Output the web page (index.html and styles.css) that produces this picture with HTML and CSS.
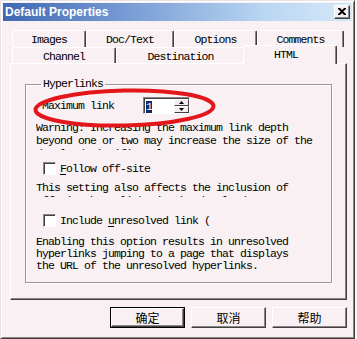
FILE: index.html
```html
<!DOCTYPE html>
<html>
<head>
<meta charset="utf-8">
<link rel="stylesheet" href="styles.css">
</head>
<body>
<div class="window">
  <div class="titlebar">
    <span class="title">Default Properties</span>
    <span class="close"><svg width="8" height="7" viewBox="0 0 8 7"><path d="M0 0h2l2 2 2-2h2v1L5.2 3.5 8 6v1H6L4 5 2 7H0V6l2.8-2.5L0 1z" fill="#000"/></svg></span>
  </div>
  <div class="client">
    <div class="tabs">
      <div class="tabrow">
        <div class="tab t-images">Images</div>
        <div class="tab t-doc">Doc/Text</div>
        <div class="tab t-options">Options</div>
        <div class="tab t-comments">Comments</div>
      </div>
      <div class="tabrow front">
        <div class="tab t-channel">Channel</div>
        <div class="tab t-dest">Destination</div>
        <div class="tab t-html active">HTML</div>
      </div>
    </div>
    <div class="panel">
      <fieldset class="group">
        <legend>Hyperlinks</legend>
        <div class="maxrow">
          <span class="maxlabel">Maximum link</span>
          <div class="spin">
            <div class="spin-edit"><span class="sel">1</span></div>
            <div class="spin-btns">
              <div class="sbtn"><svg width="5" height="3" viewBox="0 0 5 3"><path d="M2.5 0L5 3H0z" fill="#000"/></svg></div>
              <div class="sbtn"><svg width="5" height="3" viewBox="0 0 5 3"><path d="M0 0h5L2.5 3z" fill="#000"/></svg></div>
            </div>
          </div>
        </div>
        <p class="note warn">Warning: Increasing the maximum link depth<br>beyond one or two may increase the size of the<br>download significantly.</p>
        <div class="check c1"><span class="box"></span><span class="lbl"><u>F</u>ollow off-site</span></div>
        <p class="note setting">This setting also affects the inclusion of<br>off-site hyperlinks in the download.</p>
        <div class="check c2"><span class="box"></span><span class="lbl">Include <u>u</u>nresolved link (</span></div>
        <p class="note enabling">Enabling this option results in unresolved<br>hyperlinks jumping to a page that displays<br>the URL of the unresolved hyperlinks.</p>
      </fieldset>
      <svg class="mark" width="337" height="237" viewBox="0 0 337 237">
        <ellipse cx="113.5" cy="44" rx="89" ry="17.5" transform="rotate(-1.2 113.5 44)" fill="none" stroke="#e3161c" stroke-width="4"/>
      </svg>
    </div>
    <div class="buttons">
      <div class="btn default"><span class="btn-in">确定</span></div>
      <div class="btn"><span class="btn-in">取消</span></div>
      <div class="btn"><span class="btn-in">帮助</span></div>
    </div>
  </div>
</div>
</body>
</html>
```

FILE: styles.css
```css
* { box-sizing: border-box; }
html, body { margin: 0; padding: 0; background: #fbf6f7; }
body { width: 357px; height: 339px; overflow: hidden; }

.window {
  width: 355px;
  height: 339px;
  background: #f8f0f2;
  border: 1px solid;
  border-color: #e8e2e4 #404040 #404040 #e8e2e4;
  box-shadow: inset 1px 1px 0 #ffffff, inset -1px -1px 0 #8a8486;
  padding: 2px;
  font-family: "Liberation Mono", "DejaVu Sans Mono", monospace;
  font-size: 11.5px;
  letter-spacing: -0.9px;
  color: #000;
}

.titlebar {
  height: 18px;
  display: flex;
  align-items: center;
  justify-content: space-between;
  padding: 0 2px 0 2px;
  background: linear-gradient(90deg, #3f68b2 0%, #7fa2d8 40%, #b9d6f2 75%, #d6e8f8 100%);
}
.title {
  font-family: "Liberation Sans", Arial, sans-serif;
  font-weight: bold;
  font-size: 12px;
  letter-spacing: 0;
  color: #fff;
}
.close {
  width: 16px;
  height: 14px;
  display: flex;
  align-items: center;
  justify-content: center;
  background: #f4eef0;
  border: 1px solid;
  border-color: #fff #404040 #404040 #fff;
  box-shadow: inset -1px -1px 0 #8a8486;
  padding-bottom: 1px;
}

.client {
  padding: 9px 5px 0 7px;
}

.tabs { padding-left: 2px; }
.tabrow {
  display: flex;
  align-items: flex-end;
  height: 17px;
}
.tabrow.front { height: 16px; }
.tab {
  height: 17px;
  line-height: 16px;
  padding-top: 1px;
  text-align: center;
  background: #f8f0f2;
  border-top: 1px solid #fff;
  border-left: 1px solid #fff;
  border-right: 1px solid #404040;
  box-shadow: inset -1px 0 0 #8a8486;
  border-radius: 2px 2px 0 0;
  white-space: nowrap;
}
.front .tab { height: 16px; line-height: 15px; }
.t-images { width: 74px; }
.t-doc { width: 88px; }
.t-options { width: 83px; }
.t-comments { width: 87px; }
.t-channel { width: 104px; }
.t-dest { width: 129px; }
.front .tab.active {
  width: 94px;
  height: 19px;
  margin-left: -2px;
  margin-bottom: -1px;
  padding-top: 1px;
  position: relative;
  z-index: 1;
  padding-right: 8px;
}

.panel {
  position: relative;
  width: 337px;
  height: 237px;
  border: 1px solid;
  border-color: #fff #404040 #404040 #fff;
  box-shadow: inset -1px -1px 0 #8a8486;
  padding: 14px 14px 0 14px;
}

.group {
  margin: 0;
  width: 307px;
  border: 1px solid #9c9698;
  box-shadow: inset 1px 1px 0 #fff, 1px 1px 0 #fff;
  padding: 7px 8px 10px 10px;
  min-width: 0;
}
.group legend {
  padding: 0 2px;
  margin-left: 5px;
  line-height: 12px;
}

.maxrow {
  display: flex;
  align-items: center;
  height: 17px;
  padding-left: 6px;
}
.maxlabel { width: 101px; white-space: nowrap; }

.spin {
  display: flex;
  width: 47px;
  height: 17px;
  background: #fff;
  border: 1px solid;
  border-color: #8a8486 #fff #fff #8a8486;
  box-shadow: inset 1px 1px 0 #404040;
}
.spin-edit {
  flex: 1;
  padding: 2px 0 0 2px;
}
.sel {
  display: inline-block;
  width: 6px;
  height: 12px;
  line-height: 12px;
  background: #0a2a6e;
  color: #fff;
  text-align: center;
  letter-spacing: 0;
}
.spin-btns {
  width: 15px;
  display: flex;
  flex-direction: column;
  padding: 1px 0 0 0;
}
.sbtn {
  flex: 1;
  display: flex;
  align-items: center;
  justify-content: center;
  background: #f4eef0;
  border: 1px solid;
  border-color: #fff #404040 #404040 #fff;
}

.note {
  margin: 0;
  line-height: 13px;
  white-space: nowrap;
  overflow: hidden;
}
.warn { margin-top: 7px; height: 29px; }
.setting { margin-top: 6px; height: 16px; }
.enabling { margin-top: 9px; line-height: 12px; }
.c1 { margin-top: 12px; }

.check {
  display: flex;
  align-items: center;
  height: 13px;
  padding-left: 7px;
}
.c2 { margin-top: 17px; }
.box {
  width: 13px;
  height: 13px;
  background: #fff;
  border: 1px solid;
  border-color: #8a8486 #fff #fff #8a8486;
  box-shadow: inset 1px 1px 0 #404040;
  margin-right: 4px;
}
.lbl { white-space: nowrap; }
.lbl u { text-decoration-thickness: 1px; text-underline-offset: 2px; }

.mark {
  position: absolute;
  left: 0;
  top: 0;
  pointer-events: none;
}

.buttons {
  display: flex;
  justify-content: flex-end;
  gap: 6px;
  margin-top: 7px;
}
.btn {
  width: 75px;
  height: 21px;
  border: 1px solid;
  border-color: #fff #404040 #404040 #fff;
  box-shadow: inset -1px -1px 0 #8a8486;
  display: flex;
}
.btn.default {
  border: 1px solid #000;
  box-shadow: none;
}
.btn-in {
  flex: 1;
  display: flex;
  align-items: center;
  justify-content: center;
  font-family: "Noto Sans CJK SC", "Noto Sans", sans-serif;
  font-size: 12px;
  letter-spacing: 0;
  line-height: 1;
}
.btn.default .btn-in {
  border: 1px solid;
  border-color: #fff #404040 #404040 #fff;
  box-shadow: inset -1px -1px 0 #8a8486;
}
```
